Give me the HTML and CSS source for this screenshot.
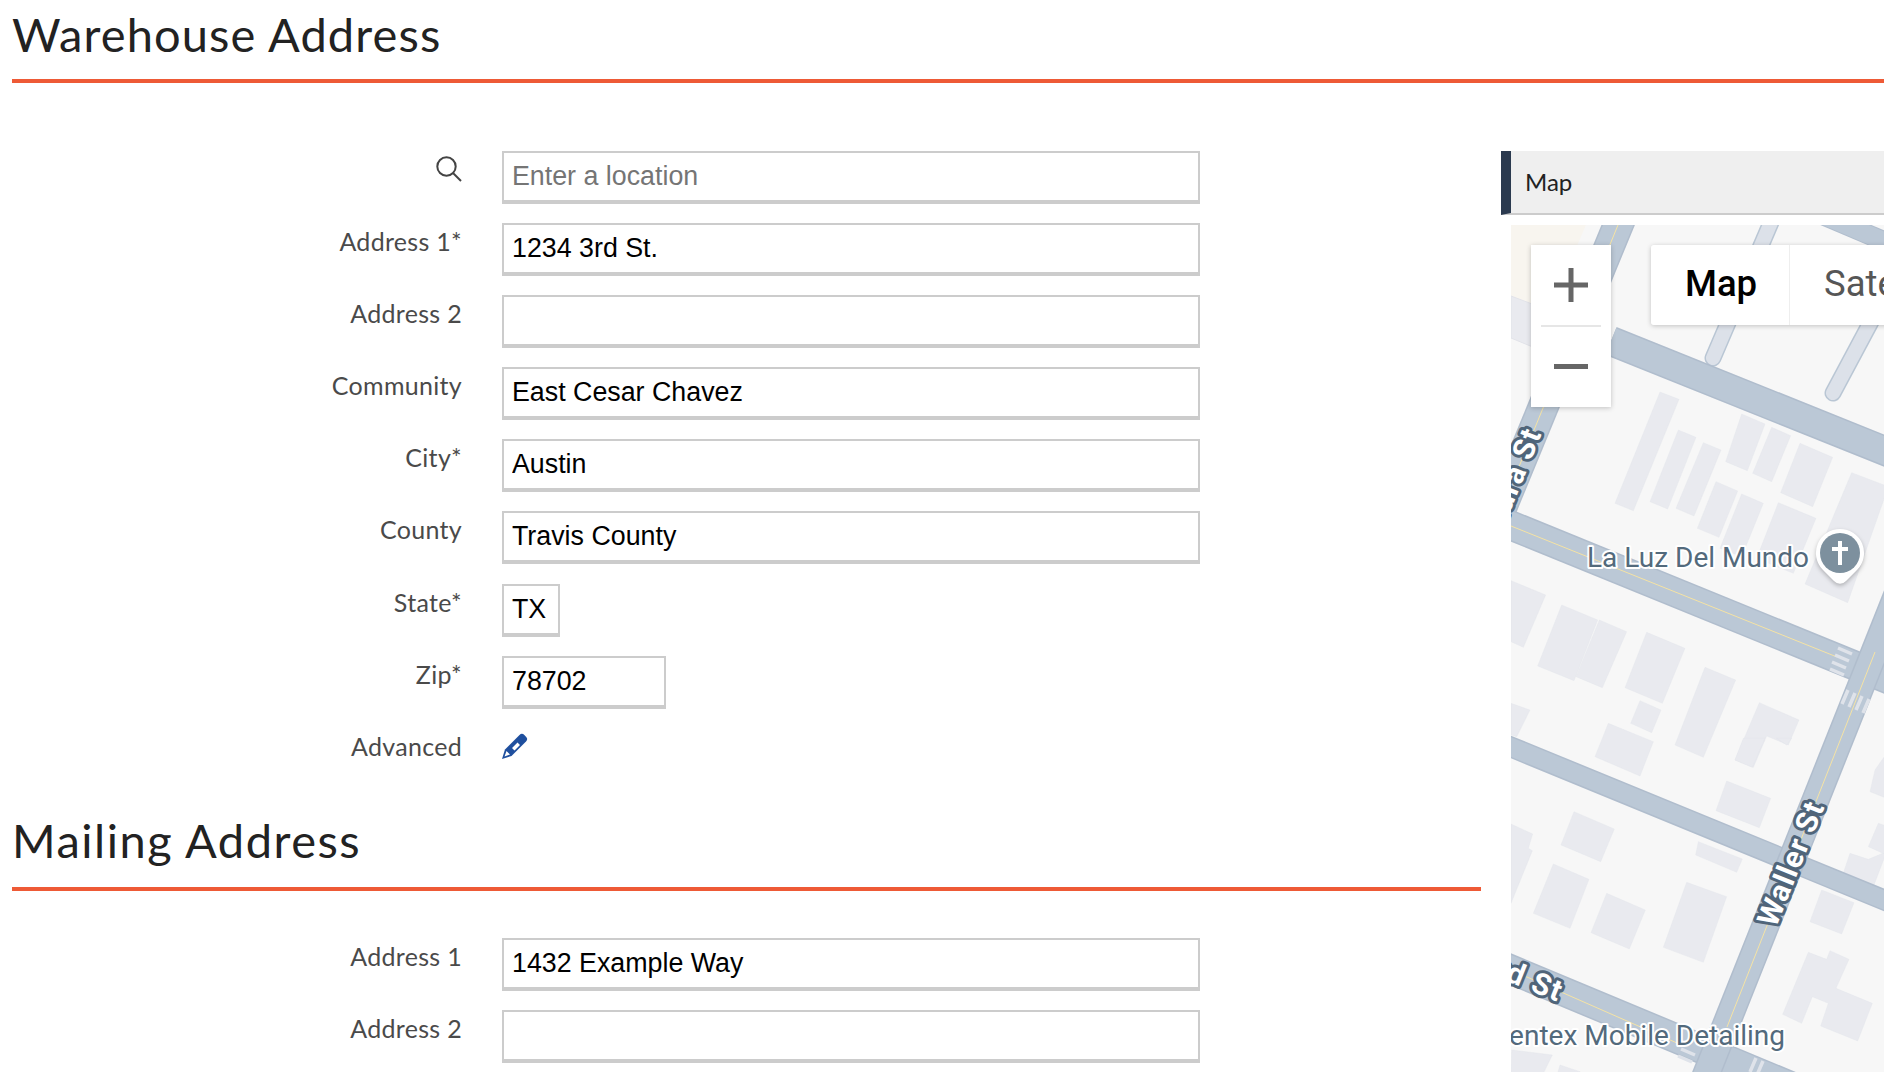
FILE: index.html
```html
<!DOCTYPE html>
<html lang="en">
<head>
<meta charset="utf-8">
<title>Warehouse Address</title>
<link rel="stylesheet" href="styles.css">
</head>
<body>
<div class="page">
  <h1 class="section-title section-title-top">Warehouse Address</h1>
  <div class="columns">
    <div class="form-col">
      <div class="row">
        <div class="label label-icon">
          <svg class="search-icon" width="26" height="26" viewBox="0 0 26 26"><circle cx="10.5" cy="10.5" r="9.2"/><line x1="17" y1="17" x2="25" y2="25"/></svg>
        </div>
        <input class="field" type="text" placeholder="Enter a location">
      </div>
      <div class="row"><div class="label">Address 1*</div><input class="field" type="text" value="1234 3rd St."></div>
      <div class="row"><div class="label">Address 2</div><input class="field" type="text" value=""></div>
      <div class="row"><div class="label">Community</div><input class="field" type="text" value="East Cesar Chavez"></div>
      <div class="row"><div class="label">City*</div><input class="field" type="text" value="Austin"></div>
      <div class="row"><div class="label">County</div><input class="field" type="text" value="Travis County"></div>
      <div class="row"><div class="label">State*</div><input class="field field-state" type="text" value="TX"></div>
      <div class="row"><div class="label">Zip*</div><input class="field field-zip" type="text" value="78702"></div>
      <div class="row row-advanced">
        <div class="label">Advanced</div>
        <svg class="pencil" width="26" height="26" viewBox="0 0 26 26">
          <path class="pencil-body" d="M0 26 L3 16.5 L17.5 2 a3.4 3.4 0 0 1 4.8 0 l1.7 1.7 a3.4 3.4 0 0 1 0 4.8 L9.5 23 Z"/>
          <path class="pencil-mark" d="M2.5 23.5 L4.5 18 L8 21.5 Z M10 15 L15.5 9.5 L18 12 L12.5 17.5 Z"/>
        </svg>
      </div>
      <h2 class="section-title section-title-sub">Mailing Address</h2>
      <div class="row"><div class="label">Address 1</div><input class="field" type="text" value="1432 Example Way"></div>
      <div class="row"><div class="label">Address 2</div><input class="field" type="text" value=""></div>
    </div>
    <div class="map-col">
      <div class="map-header">Map</div>
      <div class="map">
        <svg class="map-canvas" width="373" height="847" viewBox="1511 225 373 847">
          <polygon class="park" points="1511,225 1586,225 1549,310 1511,296"/>
          <polygon class="building" points="1511,296 1540,307 1540,350 1511,338"/>
          <g class="buildings-a">
            <polygon class="building" points="480,-84 537,-62 400,272 345,250"/>
            <polygon class="building" points="535,30 588,52 503,267 450,245"/>
            <polygon class="building" points="610,68 663,90 582,288 528,265"/>
            <polygon class="building" points="648,185 713,213 657,352 592,325"/>
            <polygon class="building" points="725,222 790,250 725,410 660,385"/>
            <polygon class="building" points="725,-18 795,12 742,152 677,125"/>
            <polygon class="building" points="815,22 872,47 815,185 758,160"/>
            <polygon class="building" points="900,70 998,112 938,260 842,218"/>
            <polygon class="building" points="835,248 948,295 880,460 770,415"/>
            <polygon class="building" points="1055,158 1165,200 1043,548 915,492"/>
            <polygon class="building" points="33,482 137,525 70,682 33,665"/>
            <polygon class="building" points="185,555 293,600 222,782 113,738"/>
            <polygon class="building" points="298,600 380,635 307,803 228,770"/>
            <polygon class="building" points="440,637 555,685 487,850 375,803"/>
            <polygon class="building" points="420,842 483,870 455,938 392,910"/>
            <polygon class="building" points="615,742 707,780 610,1012 525,975"/>
            <polygon class="building" points="778,848 897,900 865,975 800,948 760,1042 705,1020"/>
            <polygon class="building" points="33,850 90,870 50,950 33,945"/>
            <polygon class="building" points="325,910 460,965 420,1068 285,1010"/>
          </g>
          <g class="buildings-b">
            <polygon class="building" points="680,123 812,175 778,263 648,212"/>
            <polygon class="building" points="595,305 727,357 710,397 587,345"/>
            <polygon class="building" points="222,215 343,267 302,365 183,315"/>
            <polygon class="building" points="160,372 267,418 210,565 100,520"/>
            <polygon class="building" points="320,460 436,510 388,627 273,578"/>
            <polygon class="building" points="560,427 680,470 610,667 490,622"/>
            <polygon class="building" points="965,450 1062,488 1025,582 930,545"/>
            <polygon class="building" points="33,252 98,282 85,325 97,332 33,490"/>
            <polygon class="building" points="990,632 1047,658 1008,745 1117,790 1073,903 962,858 985,790 937,770 905,850 848,823 925,637 980,658"/>
            <polygon class="building" points="1050,340 1105,358 1160,335 1120,440 1028,405"/>
            <polygon class="building" points="1135,250 1160,258 1160,345 1105,320"/>
            <polygon class="building" points="1125,90 1160,40 1160,175 1110,155"/>
            <polygon class="building" points="35,930 157,945 130,1000 33,1000"/>
            <polygon class="building" points="180,975 240,995 230,1010 170,1010"/>
            <polygon class="building" points="730,-5 795,-5 757,82 705,60"/>
            <polygon class="building" points="830,-5 875,-5 860,15"/>
          </g>
          <line class="alley" x1="1790" y1="178" x2="1713" y2="358"/>
          <line class="alley" x1="1905" y1="258" x2="1833" y2="393"/>
          <line class="alley-inner" x1="1790" y1="178" x2="1713" y2="358"/>
          <line class="alley-inner" x1="1905" y1="258" x2="1833" y2="393"/>
          <line class="road-edge road-left" x1="1640" y1="172" x2="1490" y2="536"/>
          <line class="road road-left" x1="1640" y1="172" x2="1490" y2="536"/>
          <line class="center" x1="1618" y1="225" x2="1516" y2="474"/>
          <line class="road-thin-edge" x1="1820" y1="214" x2="1900" y2="248"/>
          <line class="road-thin" x1="1820" y1="214" x2="1900" y2="248"/>
          <line class="road-edge" x1="1611" y1="341" x2="1900" y2="457"/>
          <line class="road" x1="1611" y1="341" x2="1900" y2="457"/>
          <line class="road-edge" x1="1500" y1="521" x2="1900" y2="684"/>
          <line class="road" x1="1500" y1="521" x2="1900" y2="684"/>
          <line class="center" x1="1511" y1="526" x2="1837" y2="657"/>
          <line class="road-edge road-mid" x1="1500" y1="742.5" x2="1900" y2="906.5"/>
          <line class="road road-mid" x1="1500" y1="742.5" x2="1900" y2="906.5"/>
          <line class="road-edge" x1="1500" y1="965" x2="1800" y2="1090"/>
          <line class="road" x1="1500" y1="965" x2="1800" y2="1090"/>
          <line class="center" x1="1511" y1="970" x2="1677" y2="1043"/>
          <line class="road-edge road-waller" x1="1900" y1="588" x2="1700" y2="1090"/>
          <line class="road road-waller" x1="1900" y1="588" x2="1700" y2="1090"/>
          <line class="center" x1="1875" y1="652" x2="1727" y2="1027"/>
          <path class="crosswalk" d="M1838 648l14 6M1835 655l14 6M1832 662l14 6M1830 669l14 6"/>
          <path class="crosswalk" d="M1848 690l-6 14M1855 693l-6 14M1862 696l-6 14M1869 699l-6 14"/>
          <path class="crosswalk" d="M1681 1049l14 6M1678 1056l14 6M1756 1058l-6 14M1763 1061l-6 14"/>
          <text class="poi" x="1587" y="567">La Luz Del Mundo</text>
          <text class="poi" x="1785" y="1045" text-anchor="end">Gentex Mobile Detailing</text>
          <text class="street" transform="translate(1825 806) rotate(-68)" text-anchor="end">Waller St</text>
          <text class="street" transform="translate(1542 433) rotate(-68)" text-anchor="end">Laura St</text>
          <text class="street" transform="translate(1558 1002) rotate(22)" text-anchor="end">3rd St</text>
          <g class="pin">
            <path class="pin-shell" d="M1840 529a24 24 0 0 1 17 41l-11 11a8 8 0 0 1-12 0l-11-11a24 24 0 0 1 17-41Z"/>
            <circle class="pin-core" cx="1840" cy="553" r="20"/>
            <path class="pin-cross" d="M1838 541h4v6h6v4h-6v14h-4v-14h-6v-4h6Z"/>
          </g>
        </svg>
        <div class="zoom-control">
          <svg width="34" height="34" viewBox="0 0 34 34"><path class="zoom-glyph" d="M14.5 0h5v14.5h14.5v5H19.5v14.5h-5V19.5H0v-5h14.5Z"/></svg>
          <div class="zoom-divider"></div>
          <svg width="34" height="34" viewBox="0 0 34 34"><rect class="zoom-glyph" x="0" y="14" width="34" height="5"/></svg>
        </div>
        <div class="type-control">
          <div class="type-button type-active">Map</div>
          <div class="type-button">Satellite</div>
        </div>
      </div>
    </div>
  </div>
</div>
</body>
</html>
```

FILE: styles.css
```css
* { box-sizing: border-box; }
html, body { margin: 0; padding: 0; background: #fff; overflow: hidden; }
.page { width: 1884px; height: 1072px; overflow: hidden; padding-left: 12px; }

.section-title {
  margin: 0;
  font-family: Lato, "Open Sans", sans-serif;
  font-weight: 400;
  font-size: 47px;
  color: #222;
  border-bottom: 4px solid #ee5a36;
}
.section-title-top { height: 83px; line-height: 68px; letter-spacing: 1.1px; }
.section-title-sub { height: 89px; line-height: 76px; margin-bottom: 47.5px; letter-spacing: 1.5px; }

.columns { display: flex; margin-top: 68px; column-gap: 20px; }
.form-col { width: 1469px; flex: none; }

.row { display: flex; height: 53px; margin-bottom: 19.1px; }
.row-advanced { height: 50px; margin-bottom: 24px; }
.label {
  width: 450px;
  flex: none;
  margin-right: 40px;
  text-align: right;
  font-family: Lato, "Open Sans", sans-serif;
  font-size: 25px;
  letter-spacing: 0.3px;
  line-height: 30px;
  padding-top: 3px;
  color: #4a4a4a;
}
.label-icon { padding-top: 5px; display: flex; justify-content: flex-end; }
.search-icon { fill: none; stroke: #444; stroke-width: 2; }

.field {
  width: 698px;
  height: 53px;
  border: 2px solid #ccc;
  border-bottom-width: 4px;
  border-radius: 0;
  padding: 0 8px;
  background: #fff;
  outline: none;
  font-family: "Liberation Sans", Arial, sans-serif;
  font-size: 26.8px;
  color: #000;
}
.field::placeholder { color: #757575; opacity: 1; }
.field-state { width: 58px; }
.field-zip { width: 164px; }
.pencil { flex: none; margin-top: 5px; }
.pencil-body { fill: #1f4f9e; }
.pencil-mark { fill: #fff; }

.map-col { flex: none; width: 383px; }
.map-header {
  height: 64px;
  background: #efefef;
  border-left: 10px solid #2b3a4f;
  border-bottom: 2px solid #ccc;
  padding-left: 14px;
  font-family: Lato, "Open Sans", sans-serif;
  font-size: 24px;
  line-height: 62px;
  color: #222;
}
.map {
  position: relative;
  margin: 10px 0 0 10px;
  width: 373px;
  height: 847px;
  overflow: hidden;
  background: #f7f7f7;
}
.map-canvas { display: block; }

.park { fill: #f8f5ef; }
.building { fill: #e9eaef; stroke: #e2e3e9; stroke-width: 1; }
.buildings-a { transform: translate(1500px, 420px) scale(0.33333); }
.buildings-b { transform: translate(1500px, 740px) scale(0.33333); }
.road-edge { stroke: #b0bdcd; stroke-width: 30; }
.road { stroke: #bbc8d6; stroke-width: 27; }
.road-edge.road-mid { stroke-width: 21; }
.road.road-mid { stroke-width: 18; }
.road-edge.road-waller { stroke-width: 28; }
.road.road-waller { stroke-width: 25; }
.road-edge.road-left { stroke-width: 31; }
.road.road-left { stroke-width: 28; }
.road-thin-edge { stroke: #b0bdcd; stroke-width: 20; }
.road-thin { stroke: #bbc8d6; stroke-width: 18; }
.alley { stroke: #b9c6d4; stroke-width: 17; stroke-linecap: round; }
.alley-inner { stroke: #dce1e9; stroke-width: 14; stroke-linecap: round; }
.center { stroke: #f5e3a4; stroke-width: 1; }
.crosswalk { stroke: #dfe3ea; stroke-width: 3.5; fill: none; }
.poi {
  font-family: Roboto, sans-serif;
  font-size: 28px;
  fill: #536a7c;
  stroke: #fff;
  stroke-width: 4;
  paint-order: stroke;
  stroke-linejoin: round;
}
.street {
  font-family: Roboto, sans-serif;
  font-weight: 700;
  font-size: 30px;
  letter-spacing: 1.2px;
  fill: #fff;
  stroke: #50657a;
  stroke-width: 6;
  paint-order: stroke;
  stroke-linejoin: round;
}
.pin-shell { fill: #fff; filter: drop-shadow(0 2px 2px rgba(0,0,0,.25)); }
.pin-core { fill: #7d909e; }
.pin-cross { fill: #fff; }

.zoom-control {
  position: absolute;
  left: 20px;
  top: 20px;
  width: 80px;
  height: 162px;
  background: #fff;
  box-shadow: 0 1px 5px rgba(0,0,0,.22);
  display: flex;
  flex-direction: column;
  align-items: center;
  padding-top: 23px;
}
.zoom-divider { width: 60px; height: 2px; background: #e6e6e6; margin: 23px 0 23px; }
.zoom-glyph { fill: #666; }

.type-control {
  position: absolute;
  left: 140px;
  top: 20px;
  height: 80px;
  display: flex;
  column-gap: 1px;
  border-radius: 3px;
  box-shadow: 0 1px 5px rgba(0,0,0,.22);
  background: #eee;
  font-family: Roboto, sans-serif;
  font-size: 36.5px;
}
.type-button { background: #fff; height: 80px; line-height: 78px; padding: 0 34px; color: #565656; }
.type-active { font-weight: 500; color: #000; border-radius: 3px 0 0 3px; width: 138px; }
```
